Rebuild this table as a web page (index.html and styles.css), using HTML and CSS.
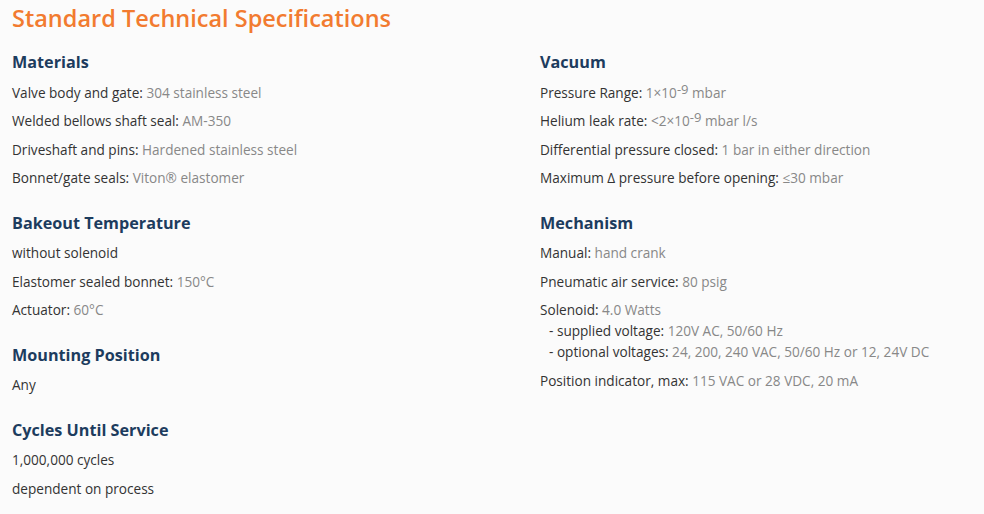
FILE: index.html
```html
<!DOCTYPE html>
<html>
<head>
<meta charset="utf-8">
<link rel="stylesheet" href="styles.css">
</head>
<body>
<div class="page">
  <h1 class="title">Standard Technical Specifications</h1>
  <div class="cols">
    <div class="col">
      <section class="sec">
        <h2>Materials</h2>
        <p>Valve body and gate: <span class="v">304 stainless steel</span></p>
        <p>Welded bellows shaft seal: <span class="v">AM-350</span></p>
        <p>Driveshaft and pins: <span class="v">Hardened stainless steel</span></p>
        <p>Bonnet/gate seals: <span class="v">Viton® elastomer</span></p>
      </section>
      <section class="sec">
        <h2>Bakeout Temperature</h2>
        <p>without solenoid</p>
        <p>Elastomer sealed bonnet: <span class="v">150°C</span></p>
        <p>Actuator: <span class="v">60°C</span></p>
      </section>
      <section class="sec">
        <h2>Mounting Position</h2>
        <p>Any</p>
      </section>
      <section class="sec">
        <h2>Cycles Until Service</h2>
        <p>1,000,000 cycles</p>
        <p>dependent on process</p>
      </section>
    </div>
    <div class="col">
      <section class="sec">
        <h2>Vacuum</h2>
        <p>Pressure Range: <span class="v">1×10<sup>-9</sup> mbar</span></p>
        <p>Helium leak rate: <span class="v">&lt;2×10<sup>-9</sup> mbar l/s</span></p>
        <p>Differential pressure closed: <span class="v">1 bar in either direction</span></p>
        <p>Maximum Δ pressure before opening: <span class="v">≤30 mbar</span></p>
      </section>
      <section class="sec">
        <h2>Mechanism</h2>
        <p>Manual: <span class="v">hand crank</span></p>
        <p>Pneumatic air service: <span class="v">80 psig</span></p>
        <p>Solenoid: <span class="v">4.0 Watts</span><br>
          <span class="sub">- supplied voltage: <span class="v">120V AC, 50/60 Hz</span></span><br>
          <span class="sub">- optional voltages: <span class="v">24, 200, 240 VAC, 50/60 Hz or 12, 24V DC</span></span></p>
        <p>Position indicator, max: <span class="v">115 VAC or 28 VDC, 20 mA</span></p>
      </section>
    </div>
  </div>
</div>
</body>
</html>
```

FILE: styles.css
```css
html, body {
  margin: 0;
  padding: 0;
  background: #fbfbfb;
}
body {
  font-family: "Open Sans", "Noto Sans", sans-serif;
  color: #333;
}
.page {
  padding: 0 12px;
}
.title {
  margin: 0;
  padding-top: 4px;
  font-size: 23.5px;
  line-height: 28px;
  font-weight: 600;
  color: #f27b30;
}
.cols {
  display: grid;
  grid-template-columns: 528px 1fr;
  margin-top: 20px;
}
.sec {
  margin-bottom: 24.5px;
}
.sec h2 {
  margin: 0 0 9.5px;
  font-size: 16.2px;
  line-height: 20px;
  font-weight: 700;
  color: #1d3c5e;
}
.sec p {
  margin: 0 0 7.5px;
  font-size: 13.6px;
  line-height: 21px;
}
.v {
  color: #888;
}
.sub {
  padding-left: 9px;
}
sup {
  font-size: 13px;
  line-height: 0;
  vertical-align: 4px;
}
```
